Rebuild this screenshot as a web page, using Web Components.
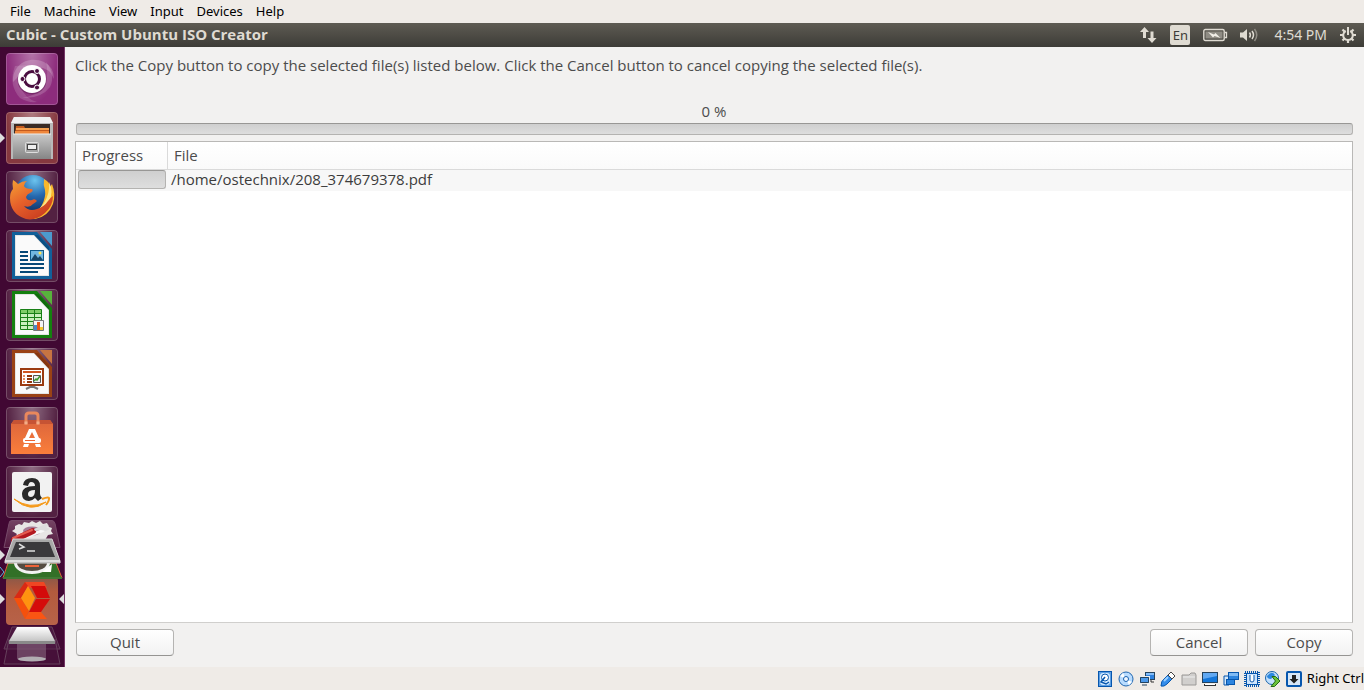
<!DOCTYPE html>
<html lang="en">
<head>
<meta charset="utf-8">
<title>Cubic - Custom Ubuntu ISO Creator</title>
<style>
  html, body { margin: 0; height: 100%; }
  body { font-family: "Noto Sans", "Open Sans", sans-serif; font-size: 13px; color: #1a1a1a; overflow: hidden; }
</style>
</head>
<body>
<vm-window></vm-window>

<template id="vm-window">
  <style>
    :host { display: grid; grid-template-rows: auto auto minmax(0, 1fr) auto; height: 100vh; background: #efebe7; }
    .desktop { display: flex; min-height: 0; }
    copy-page { flex: 1; }
  </style>
  <menu-bar></menu-bar>
  <top-panel></top-panel>
  <div class="desktop">
    <app-launcher></app-launcher>
    <copy-page></copy-page>
  </div>
  <status-bar></status-bar>
</template>

<template id="menu-bar">
  <style>
    :host { display: block; background: #efebe7; height: 23px; }
    nav { display: flex; gap: 13px; padding-left: 10px; }
    button { all: unset; font-size: 13px; line-height: 23px; color: #000; }
  </style>
  <nav aria-label="Machine window">
    <button>File</button><button>Machine</button><button>View</button><button>Input</button><button>Devices</button><button>Help</button>
  </nav>
</template>

<template id="top-panel">
  <style>
    :host { display: flex; align-items: center; height: 24px; padding: 0 8px 0 6px; background: linear-gradient(#5e5b53, #3d3c37); color: #dfdbd2; box-sizing: border-box; }
    h1 { margin: 0; font-family: "Open Sans", sans-serif; font-size: 15px; line-height: 22px; padding-bottom: 2px; font-weight: 700; flex: 1; }
    .tray { display: flex; align-items: center; }
    time { font-size: 14px; line-height: 24px; margin: 0 13px 0 15px; white-space: nowrap; }
    svg { display: block; }
    .lang { width: 20px; height: 20px; margin: 0 13px 0 13px; border-radius: 2px; background: #dfdbd2; color: #3d3c37; font-size: 13px; line-height: 20px; text-align: center; }
    .bat { margin-right: 11px; }
  </style>
  <h1>Cubic - Custom Ubuntu ISO Creator</h1>
  <div class="tray">
    <svg width="18" height="18" viewBox="0 0 18 18" fill="#dfdbd2"><path d="M5.500 1 10 6H7v6H4V6H1z"/><path d="M13 17 8.500 12H11.500V5.500h3V12h3z"/></svg>
    <span class="lang">En</span>
    <svg class="bat" width="25" height="14" viewBox="0 0 25 14"><rect x=".8" y="1.500" width="20.400" height="11" rx="1.500" fill="none" stroke="#dfdbd2" stroke-width="1.400"/><rect x="2.500" y="3.500" width="17" height="7" fill="#8f8c84"/><path d="M22 4.500h1.500v5H22" fill="none" stroke="#dfdbd2" stroke-width="1.300"/><path d="m5 4 6 2.500 1.500-1.500 5 5-6-2-1.500 1.500z" fill="#f2efe8"/></svg>
    <svg width="20" height="16" viewBox="0 0 20 16" fill="none"><path d="M1 5.500h3L8 2v12L4 10.500H1z" fill="#dfdbd2"/><path d="M10.500 5.500q1.800 2.500 0 5M13 4q3 4 0 8" stroke="#dfdbd2" stroke-width="1.500"/><path d="M15.500 2q4.500 6 0 12" stroke="#8f8c84" stroke-width="1.500"/></svg>
    <time>4:54 PM</time>
    <svg width="16" height="16" viewBox="0 0 16 16" fill="none" stroke="#dfdbd2"><path d="M5.800 4A4.800 4.800 0 1 0 10.200 4M8 0v8" stroke-width="2"/><path d="M0 8h3M13 8h3M2.500 2.500l2 2M13.500 2.500l-2 2M2.500 13.500l2-2M13.500 13.500l-2-2M8 13v3" stroke-width="2.200"/></svg>
  </div>
</template>

<template id="launcher-tile">
  <style>
    :host { display: block; position: relative; padding: 0 6px; }
    button { all: unset; display: block; width: 52px; height: 52px; border-radius: 4px; overflow: hidden; box-sizing: border-box;
      background: radial-gradient(ellipse at 50% 0, rgba(255,255,255,.34), rgba(255,255,255,0) 70%), var(--tile, #532142); box-shadow: inset 0 0 0 1px rgba(255,255,255,.2); }
    :host([running])::before { content: ""; position: absolute; left: 0; top: 21px; border: 5px solid transparent; border-left-color: #dedede; border-right: 0; }
    ::slotted(svg) { display: block; }
  </style>
  <button><slot></slot></button>
</template>

<template id="app-launcher">
  <style>
    :host { display: flex; flex-direction: column; gap: 7px; width: 65px; padding-top: 6px; box-sizing: border-box; overflow: hidden; background: #410833; box-shadow: inset -1px 0 #743665; }
    .stack { display: block; flex: none; margin-top: -7px; }
    .dash { --tile: #8d2c7c; }
    .files { --tile: #86383f; }
  </style>
  <launcher-tile class="dash" label="Search your computer">
    <svg width="52" height="52" viewBox="0 0 52 52">
      <g fill="#fff">
        <path d="M7 29C6 12 22 2 38 9q10 5 10 17-4-11-16-12Q16 12 11 25z" fill-opacity=".2"/>
        <path d="M40 9q10 12 4 25-9 12-28 11 12-2 19-8 9-10 5-28z" fill-opacity=".16"/>
        <path d="M9 13Q2 32 14 45q8 5 17 4-13-4-16-15Q12 22 23 12z" fill-opacity=".14"/>
      </g>
      <circle cx="26" cy="27" r="14.500" fill="#5b1550" opacity=".5"/><circle cx="26" cy="26" r="14" fill="#fff"/>
      <circle cx="26" cy="26" r="7.500" fill="none" stroke="#4a0d40" stroke-width="3"/>
      <g fill="#4a0d40" stroke="#fff" stroke-width="1"><circle cx="16.500" cy="26" r="2.500"/><circle cx="31" cy="18" r="2.500"/><circle cx="31" cy="34.500" r="2.500"/></g>
    </svg>
  </launcher-tile>
  <launcher-tile class="files" label="Files" running>
    <svg width="52" height="52" viewBox="0 0 52 52">
      <defs><linearGradient id="cab" x2="0" y2="1"><stop stop-color="#c9c9c9"/><stop offset="1" stop-color="#858585"/></linearGradient></defs>
      <path d="M8 5h36l3 6v36H5V11z" fill="#b9b9b9"/><path d="M8 5h36l3 6H5z" fill="#f0f0f0"/>
      <path d="M8 12h36v10H8z" fill="#3a2b24"/><path d="M10 14h8l1 2h24v6H9z" fill="#c45a1e"/><path d="M10 16h33v2H10z" fill="#f5a04f"/><path d="M9 19h34v3H9z" fill="#f0883c"/>
      <path d="M7 22h38v25H7z" fill="url(#cab)"/><path d="M7 22h38" stroke="#ececec"/>
      <rect x="19.500" y="30.500" width="13" height="10" rx="1" fill="#a5a5a5" stroke="#dedede"/><rect x="21.500" y="32.500" width="9" height="5" fill="#eee" stroke="#444"/>
    </svg>
  </launcher-tile>
  <launcher-tile label="Firefox Web Browser">
    <svg width="52" height="52" viewBox="0 0 52 52">
      <defs><radialGradient id="globe" cx=".55" cy=".15" r=".9"><stop stop-color="#6cc4ee"/><stop offset=".5" stop-color="#2467ad"/><stop offset="1" stop-color="#143062"/></radialGradient>
      <linearGradient id="fox" x2=".7" y2="1"><stop stop-color="#f5a334"/><stop offset=".5" stop-color="#e6612b"/><stop offset="1" stop-color="#c93d20"/></linearGradient></defs>
      <circle cx="27" cy="22" r="18" fill="url(#globe)"/>
      <path d="M38 8q6 3 6 8l2-3q4 10 1 20-5 13-18 15-8 0-14-4 16 0 21-10 4-8 3-15-2-5-1-11z" fill="#f9b72c"/><path d="M43 11q5 9 0 20-5 9-14 12l9-11q6-9 5-21z" fill="#fff09a" opacity=".8"/>
      <path d="M7 9q2 1 5 4 4-3 9-3-3 2-3 5 1 3 8 3 2 2-2 4-3 1-4 4 1 4 6 3 3-2 5 1-2 2-4 3-3 4-9 2 5 6 13 3 7-2 11-8 3-4 5-5 0 10-8 17-9 8-19 6Q4 43 4 27q0-6 3-9-1-5 0-9z" fill="url(#fox)"/>
    </svg>
  </launcher-tile>
  <launcher-tile label="LibreOffice Writer">
    <svg width="52" height="52" viewBox="0 0 52 52">
      <path d="M6 2h25l15 17v30H6z" fill="#11609a"/><path d="M9 5h20l14 15v26H9z" fill="#e4e4e4"/><path d="M10 6h18l14 15v24H10z" fill="#fafafa"/><path d="M28 5l15 16V17L32 5z" fill="#0b4f82"/><path d="M34 2h12v14z" fill="#4c9bce"/>
      <path d="M14 22h8M14 26h8M14 30h8M14 34h24M14 38h24M14 42h18" stroke="#064877" stroke-width="2"/><rect x="24" y="20" width="14" height="11" fill="#0d5888"/><path d="M25 21h12v9H25z" fill="#71b7df"/><path d="m25 30 4-6 3 4 2-2 3 4z" fill="#174565"/><circle cx="34" cy="23" r="1.500" fill="#ffe350"/>
    </svg>
  </launcher-tile>
  <launcher-tile label="LibreOffice Calc">
    <svg width="52" height="52" viewBox="0 0 52 52">
      <path d="M6 2h25l15 17v30H6z" fill="#14800f"/><path d="M9 5h20l14 15v26H9z" fill="#e4e4e4"/><path d="M10 6h18l14 15v24H10z" fill="#fafafa"/><path d="M28 5l15 16V17L32 5z" fill="#106b0c"/><path d="M34 2h12v14z" fill="#58b23c"/>
      <path d="M14.500 20.500h21v20h-21z" fill="#c9f0bd"/><path d="M14.500 20.500h21v4h-21z" fill="#7fcd68"/><path d="M14.500 20.500h21v20h-21zm7 0v20m7-20v20m-14-16h21m-21 4h21m-21 4h21m-21 4h21" fill="none" stroke="#198017"/>
      <path d="M27.500 31.500h10v10h-10z" fill="#f5f5f5" stroke="#777"/><path d="M28 36h3v5h-3z" fill="#4989c8"/><path d="M31 33h3v8h-3z" fill="#e4551d"/><path d="M34 38h3v3h-3z" fill="#f5c52b"/>
    </svg>
  </launcher-tile>
  <launcher-tile label="LibreOffice Impress">
    <svg width="52" height="52" viewBox="0 0 52 52">
      <path d="M6 2h25l15 17v30H6z" fill="#9a4215"/><path d="M9 5h20l14 15v26H9z" fill="#e4e4e4"/><path d="M10 6h18l14 15v24H10z" fill="#fafafa"/><path d="M28 5l15 16V17L32 5z" fill="#853610"/><path d="M34 2h12v14z" fill="#c77442"/>
      <path d="m26 38-6 3m6-3 6 3m-6-4v3" stroke="#777" stroke-width="2"/><rect x="15" y="21" width="22" height="16" fill="#fff" stroke="#9a3a10" stroke-width="2"/><path d="M17 24h18" stroke="#d15620" stroke-width="2"/><path d="M17 28h2m-2 3h2m-2 3h2" stroke="#e68c5c" stroke-width="2"/><path d="M21 28h5m-5 3h5m-5 3h5" stroke="#93390f" stroke-width="2"/><path d="M27.500 27.500h7v7h-7z" fill="#eee" stroke="#555"/><path d="m28 33 2-2 1 1 3-4" stroke="#3c982a" stroke-width="1.500" fill="none"/>
    </svg>
  </launcher-tile>
  <launcher-tile label="Ubuntu Software">
    <svg width="52" height="52" viewBox="0 0 52 52">
      <defs><linearGradient id="bag" x2="0" y2="1"><stop stop-color="#dc653c"/><stop offset="1" stop-color="#fa7e3b"/></linearGradient></defs>
      <path d="M8 13h36l3 4v30H5V17z" fill="url(#bag)"/><path d="M8 13h36l3 4H5z" fill="#c65334"/>
      <path d="M20 17V9q0-3 3-3h6q3 0 3 3v8" fill="none" stroke="#e9885c" stroke-width="3"/><path d="M18.500 14.500h3v3h-3zM30.500 14.500h3v3h-3z" fill="#f3ad87"/>
      <path d="M23 22h6l4 9h-4l-3-6-3 6h-4zM18 37h5l-1 3h-5zM29 37h5l1 3h-5z" fill="#fff"/><rect x="17" y="31" width="18" height="5" rx="2" fill="#fff"/><path d="M19 33.500h10" stroke="#ee6635"/>
    </svg>
  </launcher-tile>
  <launcher-tile label="Amazon">
    <svg width="52" height="52" viewBox="0 0 52 52">
      <rect x="6" y="6" width="40" height="40" rx="2" fill="#f2f2f2"/>
      <path d="M17 19q1-7 9-7 8 0 8 8v8q0 2 2 4l-4 3-3-3q-3 3-6 3-7 0-7-7 0-8 13-8 0-4-4-4-2 0-3 4zm12 5q-7 0-7 4 0 3 3 3 4 0 4-7z" fill="#292929"/>
      <path d="M8 33q16 11 32 3-15 12-32-3z" fill="#f59a1b" stroke="#f59a1b" stroke-width="1"/><path d="M36 33q8-3 7 0 0 2-3 6" fill="none" stroke="#f59a1b" stroke-width="2"/>
    </svg>
  </launcher-tile>
  <svg class="stack" width="65" height="149" viewBox="0 518 65 149" role="img" aria-label="More applications">
    <defs><linearGradient id="cub" x2="0" y2="1"><stop stop-color="#8b5848"/><stop offset=".3" stop-color="#b35b3d"/><stop offset="1" stop-color="#b76249"/></linearGradient>
    <linearGradient id="set" x2="0" y2="1"><stop stop-color="#744463"/><stop offset="1" stop-color="#53193f"/></linearGradient>
    <linearGradient id="metal" x2="0" y2="1"><stop stop-color="#fff"/><stop offset="1" stop-color="#c5c5c5"/></linearGradient></defs>
    <path d="M12 520.500h40q2 0 3 3l5 24H4l5-24q0-3 3-3z" fill="url(#set)" stroke="#764a69"/>
    <path d="m15 526 4-2 3 1 2-3 5 1 3-2 4 2 4-2 3 3 4-1 2 4 3 1-1 3 2 3-5 1-3 5H20l-5-3 2-3-5-3 3-2z" fill="#e8e6e5"/><ellipse cx="32" cy="531" rx="9" ry="4.500" fill="#a57b96"/><path d="m20 539 24-9" stroke="#f8f8f8" stroke-width="3"/>
    <path d="m14 540 19-9" stroke="#b31920" stroke-width="6" stroke-linecap="round"/><path d="m13 538 19-8" stroke="#e45b50" stroke-width="2" stroke-linecap="round"/><path d="m34 529 7-3 4-2 4 1-3 2 4 2-4 2-5-1-6 1z" fill="#ddd"/>
    <path d="M8 563h48l6 15H3z" fill="#327027" stroke="#dd5c36"/>
    <ellipse cx="32" cy="563" rx="18" ry="11" fill="#f2f2f2"/><ellipse cx="32" cy="563" rx="15" ry="8" fill="#554c42"/><path d="m42 572 9 0 1-8z" fill="#fff"/><path d="M25 566h14" stroke="#ef6338" stroke-width="2"/>
    <path d="M15 543h34l9 18v2H5v-2z" fill="#a8a8a8"/><path d="M13 539h39l8 22v2H5v-2z" fill="#a8a8a8" stroke="#d5d5d5"/><path d="M16 542h33l6 15H10z" fill="#3a393c"/><path d="m19 544 5 3-5 2m8 2h8" fill="none" stroke="#ddd" stroke-width="1.500"/><path d="M5 561h55" stroke="#dedede" stroke-width="2"/>
    <rect x="6" y="577" width="52" height="48" rx="4" fill="url(#cub)"/><path d="M3 578h59" stroke="#427935" stroke-width="2"/>
    <path d="M25 582h19l3 6H27z" fill="#ef4623"/><path d="m25 582-11 16h7l7-12z" fill="#d92a14"/><path d="M14 598h7l8 13-4 8z" fill="#f5500c"/>
    <path d="M31 586h14l5 12H37z" fill="#d40a0a"/><path d="M36 599h14l-9 13H29z" fill="#d50c0a"/><path d="M29 612h12l6 7H25z" fill="#fa5513"/><path d="m28 586 7 12-6 13-8-13z" fill="#ff9310"/>
    <path d="M12 627h40l8 22H4z" fill="#4b1740" stroke="#65405b"/><path d="m9 639-5 25h56l-5-25" fill="#4b1740" fill-opacity=".5" stroke="#65405b"/>
    <path d="M17 642h29v16q0 3-15 3t-14-3z" fill="#8c6c84" opacity=".55"/><ellipse cx="32" cy="659" rx="14" ry="2.500" fill="#b2adb2"/><path d="M17 627h31l7 14H9z" fill="url(#metal)"/><path d="M9 641h46v3H9z" fill="#8a8a8a"/>
    <g fill="#dedede"><path d="m0 550 5 5-5 5zM0 594l5 5-5 5zM64 594l-5 5 5 5z"/><path d="m0 567 4 5-4 5" fill="none" stroke="#55b9de"/></g>
  </svg>
</template>

<template id="copy-page">
  <style>
    :host { display: flex; flex-direction: column; min-width: 0; padding: 8px 11px 11px 10px; box-sizing: border-box; background: #f2f1f0; color: #4c4c4c; font-family: "Open Sans", sans-serif; font-size: 15px; line-height: 20px; }
    p { margin: 0 0 26px; }
    label { text-align: center; padding-bottom: 2px; }
    progress { appearance: none; display: block; box-sizing: border-box; border: 1px solid #b4b3b1; border-top-color: #989795; border-radius: 3px; background: linear-gradient(#cfcfcf, #dedede); overflow: hidden; }
    progress::-webkit-progress-bar { background: transparent; }
    progress::-webkit-progress-value { background: #f07746; }
    .total { width: calc(100% - 1px); height: 12px; margin-left: 1px; }
    .list { flex: 1; min-height: 0; margin: 6px 0; border: 1px solid #b9b8b6; border-bottom-color: #d0cfcd; background: #fff; box-sizing: border-box; overflow: hidden; }
    table { width: 100%; border-collapse: separate; border-spacing: 0; table-layout: fixed; }
    .bar { width: 92px; }
    th { box-sizing: border-box; height: 28px; padding: 0 6px 2px; border-bottom: 1px solid #dadada; text-align: left; font-weight: 400; background: linear-gradient(#fff, #fafafa); }
    th.bar { border-right: 1px solid #dadada; }
    td { box-sizing: border-box; height: 21px; line-height: 19px; padding: 0 3px 2px; background: #f7f7f7; color: #3c3c3c; }
    td.bar { padding: 0 2px 2px; }
    td progress { width: 88px; height: 19px; }
    .actions { display: flex; gap: 7px; padding-left: 1px; }
    action-button:first-child { margin-right: auto; }
  </style>
  <p>Click the Copy button to copy the selected file(s) listed below. Click the Cancel button to cancel copying the selected file(s).</p>
  <label for="total">0 %</label>
  <progress class="total" id="total" max="100" value="0"></progress>
  <div class="list">
    <table>
      <thead><tr><th class="bar" scope="col">Progress</th><th scope="col">File</th></tr></thead>
      <tbody><tr><td class="bar"><progress max="100" value="0" aria-label="File progress"></progress></td><td>/home/ostechnix/208_374679378.pdf</td></tr></tbody>
    </table>
  </div>
  <div class="actions">
    <action-button>Quit</action-button><action-button>Cancel</action-button><action-button>Copy</action-button>
  </div>
</template>

<template id="action-button">
  <style>
    :host { display: block; }
    button { display: block; width: 98px; height: 27px; padding: 0 0 2px; border: 1px solid #b5b4b2; border-bottom-color: #959492; border-radius: 4px; background: linear-gradient(#fff, #f2f2f2); color: #4c4c4c; font: inherit; }
  </style>
  <button><slot></slot></button>
</template>

<template id="status-bar">
  <style>
    :host { display: flex; justify-content: flex-end; align-items: center; gap: 5px; height: 23px; background: #efebe7; color: #000; font-size: 13px; }
    svg { display: block; width: 16px; height: 16px; }
    span { line-height: 23px; white-space: nowrap; }
  </style>
  <svg viewBox="0 0 16 16"><rect x="1.500" y=".5" width="13" height="15" fill="#5b9ee4" stroke="#0756ad"/><rect x="3" y="2" width="10" height="12" rx="3" fill="#d5ebff"/><circle cx="8" cy="6.500" r="3.500" fill="#fff" stroke="#0756ad"/><path d="m8 6-4 5 5 2 3-2" fill="none" stroke="#0756ad" stroke-width="1.500"/></svg>
  <svg viewBox="0 0 16 16"><circle cx="8" cy="8" r="7" fill="#b9dcff" stroke="#2066af"/><path d="m8 8-6-3 3-3zM8 8l6 3-3 3z" fill="#fff"/><circle cx="8" cy="8" r="2.500" fill="#f2f7ff" stroke="#1762b0"/></svg>
  <svg viewBox="0 0 16 16"><rect x="6.500" y="1.500" width="9" height="7" fill="#2d81df" stroke="#24435e"/><path d="M7 2h8v2H7z" fill="#82bcf7"/><path d="M12 9v2h3" stroke="#333" fill="none"/><rect x=".5" y="5.500" width="10" height="7" fill="#4b99eb" stroke="#eee"/><path d="M1.500 6.500h8v5h-8zM3 14h5" fill="none" stroke="#24435e"/></svg>
  <svg viewBox="0 0 16 16"><path d="M1 15q0-5 3-7l4-4 4 4-5 5q-3 3-6 2z" fill="#348deb" stroke="#0756ad"/><path d="m8 4 3-3 4 4-3 3z" fill="#fff" stroke="#444"/><path d="m4 10 4-4" stroke="#9bd0ff" stroke-width="2"/></svg>
  <svg viewBox="0 0 16 16"><path d="M1 4h7l2-2h4l1 2v10H1z" fill="#d1cfcd" stroke="#9b9997"/><path d="M2 6h12" stroke="#eee"/></svg>
  <svg viewBox="0 0 16 16"><rect x=".5" y="1.500" width="15" height="10" fill="#1476d9" stroke="#24435e"/><path d="M1 2h14v3L1 8z" fill="#62a9f2"/><path d="M2 14h12" stroke="#333" stroke-width="2"/><path d="M3 13.500h10" stroke="#fff"/></svg>
  <svg viewBox="0 0 16 16"><path d="M1 5h5v9H1z" fill="#d4e8fb" stroke="#0756ad"/><rect x="5.500" y="1.500" width="10" height="7" fill="#2e85df" stroke="#0756ad"/><path d="M6 2h9v3H6z" fill="#80bbf5"/><rect x="3.500" y="8.500" width="8" height="5" fill="#2e85df" stroke="#0756ad"/></svg>
  <svg viewBox="0 0 16 16"><rect x="1" y="1" width="14" height="14" fill="none" stroke="#0756ad" stroke-width="2" stroke-dasharray="1 1"/><rect x="2.500" y="2.500" width="11" height="11" fill="#cde4fc" stroke="#0756ad"/><path d="M6 4v5q0 2 2 2t2-2V4" fill="#fff" stroke="#0756ad"/></svg>
  <svg viewBox="0 0 16 16"><circle cx="7" cy="7" r="6.500" fill="#c2e0fc" stroke="#1964ac"/><path d="M2 5q5-6 8-1L6 8q-4 0-4-3z" fill="#2a87df"/><path d="M7 5.500h3.500l4.500 4.500-5.500 5.500H6L10.500 10z" fill="#6cc23a" stroke="#226a12"/></svg>
  <svg viewBox="0 0 16 16"><rect x="1" y="1" width="14" height="14" rx="1" fill="#d7e6f6" stroke="#0756ad" stroke-width="2"/><path d="M6 4h4v4h2.500L8 12.500 3.500 8H6z" fill="#222"/></svg>
  <span>Right Ctrl</span>
</template>

<script>
  class TemplateElement extends HTMLElement {
    constructor() {
      super();
      const template = document.getElementById(this.localName);
      this.attachShadow({ mode: "open" }).append(template.content.cloneNode(true));
    }
  }
  class LauncherTile extends TemplateElement {
    connectedCallback() {
      this.shadowRoot.querySelector("button").setAttribute("aria-label", this.getAttribute("label") || "");
    }
  }
  customElements.define("launcher-tile", LauncherTile);
  for (const name of ["action-button", "menu-bar", "top-panel", "app-launcher", "copy-page", "status-bar", "vm-window"]) {
    customElements.define(name, class extends TemplateElement {});
  }
</script>
</body>
</html>
